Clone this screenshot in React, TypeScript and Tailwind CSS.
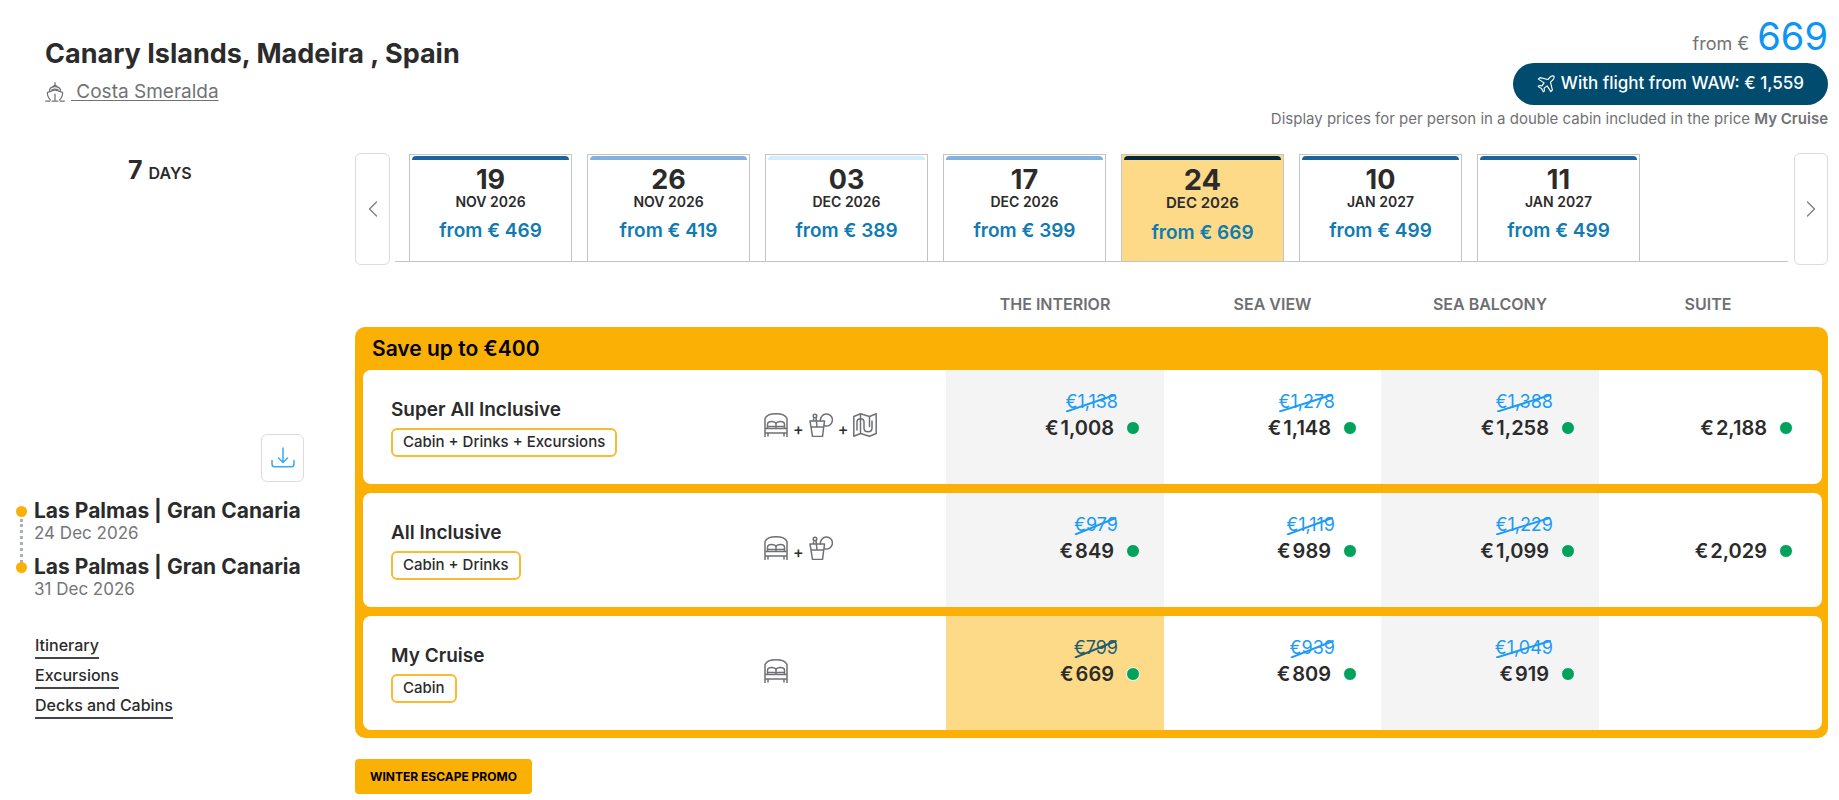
import { useState } from 'react';
import type { ReactNode } from 'react';
import { ChevronLeft, ChevronRight } from 'lucide-react';
import clsx from 'clsx';

type Departure = { day: string; month: string; price: string; bar: string };
type Fare = { was?: string; now: string } | null;
type Service = 'cabin' | 'drinks' | 'excursions';
type Package = { name: string; tag: string; services: Service[]; fares: Fare[] };

const departures: Departure[] = [
    { day: '19', month: 'NOV 2026', price: '469', bar: 'border-[#1d639b]' },
    { day: '26', month: 'NOV 2026', price: '419', bar: 'border-[#82b1df]' },
    { day: '03', month: 'DEC 2026', price: '389', bar: 'border-[#d3edfc]' },
    { day: '17', month: 'DEC 2026', price: '399', bar: 'border-[#82b1df]' },
    { day: '24', month: 'DEC 2026', price: '669', bar: 'border-[#06283a]' },
    { day: '10', month: 'JAN 2027', price: '499', bar: 'border-[#1d639b]' },
    { day: '11', month: 'JAN 2027', price: '499', bar: 'border-[#1d639b]' },
];

const cabinTypes = ['THE INTERIOR', 'SEA VIEW', 'SEA BALCONY', 'SUITE'];

const packages: Package[] = [
    {
        name: 'Super All Inclusive',
        tag: 'Cabin + Drinks + Excursions',
        services: ['cabin', 'drinks', 'excursions'],
        fares: [
            { was: '1,138', now: '1,008' },
            { was: '1,278', now: '1,148' },
            { was: '1,388', now: '1,258' },
            { now: '2,188' },
        ],
    },
    {
        name: 'All Inclusive',
        tag: 'Cabin + Drinks',
        services: ['cabin', 'drinks'],
        fares: [
            { was: '979', now: '849' },
            { was: '1,119', now: '989' },
            { was: '1,229', now: '1,099' },
            { now: '2,029' },
        ],
    },
    {
        name: 'My Cruise',
        tag: 'Cabin',
        services: ['cabin'],
        fares: [
            { was: '799', now: '669' },
            { was: '939', now: '809' },
            { was: '1,049', now: '919' },
            null,
        ],
    },
];

const stops = [
    { port: 'Las Palmas | Gran Canaria', date: '24 Dec 2026' },
    { port: 'Las Palmas | Gran Canaria', date: '31 Dec 2026' },
];

const Icon = ({ className, children }: { className: string; children: ReactNode }) => (
    <svg viewBox="0 0 24 24" fill="none" stroke="currentColor" strokeWidth="1.5" strokeLinecap="round" strokeLinejoin="round" className={className} aria-hidden="true">
        {children}
    </svg>
);

const ShipIcon = () => (
    <Icon className="h-5 w-5 shrink-0">
        <path d="M12 .8v3M8 6.500l4-3 4 3M5.500 11V9C6.500 6.500 9 5.500 12 5.500s5.500 1 6.500 3.500v2M8 9.500c2-1.300 6-1.300 8 0" />
        <path d="M6.500 21.500c-2.500-2.500-4-6-3.500-9L12 9.500l9 3c.5 3-1 6.500-3.500 9M12 14.500v7M.8 22.800h5M8.500 22.800h7M18.200 22.800h5" />
    </Icon>
);

const PlaneIcon = () => (
    <Icon className="h-[18px] w-[18px] shrink-0">
        <path d="M22.500 1.500c-2-.8-4 .2-5.200 1.500L14.500 6 4 3.500 1.800 5.500 9.500 10.500 6.500 14.500 3 14 1.500 15.500l4.500 2.500 2.500 4.500 1.500-1.500-.5-3.500 4-3L18.500 22.200l2-2.200L18 9.500l3-2.800c1.300-1.200 2.300-3.200 1.500-5.200Z" />
    </Icon>
);

const DownloadIcon = () => (
    <Icon className="h-6 w-6">
        <path d="M12 2v14M7.500 12l4.500 4.500 4.500-4.500M1 14.500V18c0 1.800.8 2.800 2.500 2.800h17c1.700 0 2.500-1 2.500-2.800v-3.500" />
    </Icon>
);

const serviceIcons: Record<Service, ReactNode> = {
    cabin: (
        <Icon className="h-6 w-6">
            <path d="M1 23.500V5.500C2.500 2 6.500.8 12 .8s9.500 1.200 11 4.700v18M1 15.500h22M1 20h22M4 20v3M20 20v3" />
            <path d="M3.500 15v-3.500C3.500 9.500 5 8.500 7.500 8.500s4.500 1 4.500 3V15M12 11.500c0-2 2-3 4.500-3s4 1 4 3V15M3.500 13.500h17" />
        </Icon>
    ),
    drinks: (
        <Icon className="h-6 w-6">
            <path d="M1 8h14.500L13.500 23.500H3.500L1 8ZM2 14h12.500M7 4.500l1 9.500M4.500 6V8" />
            <circle cx="6" cy="3" r="1.800" />
            <path d="M11.500 8a6 6 0 1 1 4.200 4.800" />
        </Icon>
    ),
    excursions: (
        <Icon className="h-6 w-6">
            <path d="M.8 3.500 7.500.8 16.500 3.500 23.200.8V20.500L16.500 23.200 7.500 20.500.8 23.200ZM7.500.8v19.700M16.500 3.500v10" />
            <path d="M4 17V9c0-4.500 7-4.500 7 0v6c0 5 8 5 8 0V8" />
        </Icon>
    ),
};

const PriceCell = ({ fare, shaded, selected, last }: { fare: Fare; shaded: boolean; selected: boolean; last: boolean }) => (
    <div
        className={clsx(
            'h-[114px] pt-5',
            last ? 'rounded-r-lg pr-[51px]' : 'pr-[46px]',
            selected ? 'bg-[#fcda88]' : shaded ? 'bg-[#f4f4f4]' : 'bg-white'
        )}
    >
        {fare && (
            <>
                <div className="flex h-[26px] justify-end">
                    {fare.was && (
                        <span className={clsx('relative text-lg leading-6', selected ? 'text-[#1f5c70]' : 'text-[#1c9bf4]')}>
                            €{fare.was}
                            <svg viewBox="0 0 100 100" preserveAspectRatio="none" className="absolute top-1 left-0 h-[18px] w-full" aria-hidden="true">
                                <line x1="2" y1="98" x2="96" y2="4" stroke="currentColor" strokeWidth="2" vectorEffect="non-scaling-stroke" />
                            </svg>
                        </span>
                    )}
                </div>
                <div className="-mr-[22px] flex items-center justify-end gap-3">
                    <span className="flex gap-0.5 text-xl leading-6 font-semibold">
                        <span>€</span>
                        <span>{fare.now}</span>
                    </span>
                    <span className="h-3.5 w-3.5 rounded-full border border-white bg-[#00a25c]"></span>
                </div>
            </>
        )}
    </div>
);

const DateStrip = () => {
    const [active, setActive] = useState(4);

    return (
        <div className="flex h-28">
            <button aria-label="Earlier dates" className="flex w-[35px] shrink-0 items-center justify-center rounded-md border border-[#dcdcdc] text-[#808080]">
                <ChevronLeft size={28} strokeWidth={1.2} />
            </button>
            <div className="mr-1.5 ml-[5px] flex h-[109px] flex-1 gap-[15px] overflow-hidden border-b border-[#c4c4c4] pt-px pl-3.5">
                {departures.map((d, i) => (
                    <button
                        key={d.day}
                        onClick={() => setActive(i)}
                        className={clsx(
                            'flex w-[163px] shrink-0 flex-col items-center border border-b-0 border-[#c4c4c4] px-0.5 pt-px',
                            i === active && 'bg-[#fcda88]'
                        )}
                    >
                        <span className={clsx('mb-[3px] h-2 w-full rounded-t-sm border-t-4', d.bar)}></span>
                        <span className={clsx('leading-[26px] font-bold', i === active ? 'text-[29px]' : 'text-[27px]')}>{d.day}</span>
                        <span className={clsx('font-semibold', i === active ? 'text-[15px] leading-5' : 'text-sm leading-[18px]')}>{d.month}</span>
                        <span className="mt-2 text-[19px] leading-6 font-semibold text-[#0f7bb0]">from € {d.price}</span>
                    </button>
                ))}
            </div>
            <button aria-label="Later dates" className="flex w-[34px] shrink-0 items-center justify-center rounded-md border border-[#dcdcdc] text-[#808080]">
                <ChevronRight size={28} strokeWidth={1.2} />
            </button>
        </div>
    );
};

const FareTable = () => (
    <table className="w-full table-fixed border-separate border-spacing-0">
        <colgroup>
            <col />
            <col className="w-[182px]" />
            <col className="w-[218px]" />
            <col className="w-[217px]" />
            <col className="w-[218px]" />
            <col className="w-[229px]" />
        </colgroup>
        <thead>
            <tr className="h-[62px] align-bottom">
                <td colSpan={2}></td>
                {cabinTypes.map((c, i) => (
                    <th key={c} scope="col" className={clsx('pb-[13px] text-base leading-5 font-semibold text-[#6e6f72]', i === 3 && 'pr-[11px]')}>
                        {c}
                    </th>
                ))}
            </tr>
        </thead>
        <tbody>
            <tr>
                <th colSpan={6} className="h-[43px] rounded-t-[10px] bg-[#fab005] pl-[17px] text-left text-[21px] leading-6 font-semibold text-black">
                    Save up to €400
                </th>
            </tr>
            {packages.map((p, row) => {
                const bottom = row === packages.length - 1;
                const cell = clsx('bg-[#fab005]', bottom ? 'pb-2' : 'pb-[9px]');
                return (
                    <tr key={p.name}>
                        <th scope="row" className={clsx(cell, 'pl-2 text-left', bottom && 'rounded-bl-[10px]')}>
                            <div className="h-[114px] rounded-l-lg bg-white pt-7 pl-7">
                                <div className="text-[19px] leading-6 font-semibold">{p.name}</div>
                                <span className="mt-1.5 inline-flex h-[29px] items-center rounded-md border-2 border-[#fbba30] px-2.5 text-[15px] font-medium">
                                    {p.tag}
                                </span>
                            </div>
                        </th>
                        <td className={cell}>
                            <div className="flex h-[114px] gap-[5px] bg-white pt-[43px] text-[#6f7073]">
                                {p.services.map((s, i) => (
                                    <span key={s} className="flex gap-[5px]">
                                        {i > 0 && <span className="pt-1 text-base leading-6 font-medium text-[#2b2b2b]">+</span>}
                                        {serviceIcons[s]}
                                    </span>
                                ))}
                            </div>
                        </td>
                        {p.fares.map((f, i) => (
                            <td key={cabinTypes[i]} className={clsx(cell, i === 3 && 'pr-1.5', i === 3 && bottom && 'rounded-br-[10px]')}>
                                <PriceCell fare={f} shaded={i % 2 === 0} selected={bottom && i === 0} last={i === 3} />
                            </td>
                        ))}
                    </tr>
                );
            })}
        </tbody>
    </table>
);

const Sidebar = () => (
    <aside>
        <p className="mt-px ml-32 flex h-8 items-baseline gap-1.5 leading-8">
            <span className="text-[25px] font-bold">7</span>
            <span className="text-base font-semibold">DAYS</span>
        </p>
        <div className="mt-62 mr-[51px] flex justify-end">
            <button aria-label="Download itinerary" className="flex h-12 w-[43px] items-center justify-center rounded-md border border-[#dcdcdc] text-[#39a8f7]">
                <DownloadIcon />
            </button>
        </div>
        <ol className="mt-[17px] ml-4 space-y-3">
            {stops.map((s, i) => (
                <li key={s.date} className="relative pl-[18px]">
                    {i === 0 && <span className="absolute top-5 left-1 h-11 border-l-3 border-dotted border-[#a9b0b8]"></span>}
                    <span className="absolute top-[7px] left-0 h-[11px] w-[11px] rounded-full bg-[#fab005]"></span>
                    <div className="text-[21px] leading-6 font-bold">{s.port}</div>
                    <div className="text-[17px] leading-5 text-[#75767a]">{s.date}</div>
                </li>
            ))}
        </ol>
        <nav className="mt-9 ml-[35px] flex flex-col items-start gap-1.5">
            {['Itinerary', 'Excursions', 'Decks and Cabins'].map((l) => (
                <a key={l} href="#" className="border-b-2 border-[#444446] pb-0.5 text-base leading-5 font-medium">
                    {l}
                </a>
            ))}
        </nav>
    </aside>
);

export default function App() {
    return (
        <div className="min-h-screen bg-white pr-[11px] font-[Inter,sans-serif] text-[#2b2b2b]">
            <header className="flex justify-between pl-[45px]">
                <div className="pt-[38px]">
                    <h1 className="text-[27px] leading-8 font-bold">Canary Islands, Madeira , Spain</h1>
                    <div className="mt-2.5 flex items-center gap-1.5 text-[#717275]">
                        <ShipIcon />
                        <a href="#" className="text-[19px] leading-6 whitespace-pre underline underline-offset-2">{' Costa Smeralda'}</a>
                    </div>
                </div>
                <div className="flex flex-col items-end pt-4">
                    <p className="flex h-10 items-baseline gap-2 text-[#717275]">
                        <span className="text-lg">from €</span>
                        <span className="text-[38px] leading-10 text-[#0d94f5]">669</span>
                    </p>
                    <button className="mt-[7px] flex h-[42px] items-center gap-1.5 rounded-full bg-[#004b6e] px-6 text-[17px] font-medium text-white">
                        <PlaneIcon />
                        With flight from WAW: € 1,559
                    </button>
                    <p className="mt-1 text-[15px] leading-5 text-[#717275]">
                        Display prices for per person in a double cabin included in the price <strong className="font-semibold">My Cruise</strong>
                    </p>
                </div>
            </header>
            <main className="mt-6 grid grid-cols-[355px_1fr]">
                <Sidebar />
                <section>
                    <DateStrip />
                    <FareTable />
                    <button className="mt-[21px] h-[35px] rounded bg-[#fab005] px-[15px] text-xs font-bold text-black">WINTER ESCAPE PROMO</button>
                </section>
            </main>
        </div>
    );
}
